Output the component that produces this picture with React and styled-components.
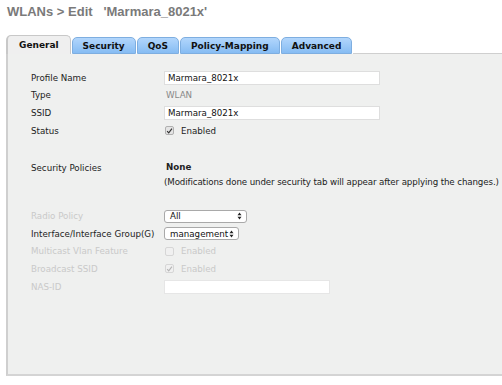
import React from 'react';
import styled, { createGlobalStyle } from 'styled-components';

const GlobalStyle = createGlobalStyle`
  html, body { margin: 0; padding: 0; background: #fff; }
  body { font-family: "DejaVu Sans", Verdana, sans-serif; }
`;

const tabs = ['General', 'Security', 'QoS', 'Policy-Mapping', 'Advanced'];

const CheckIcon = ({ checked, disabled }) => (
  <CheckBox $disabled={disabled}>
    {checked && (
      <svg width="8" height="8" viewBox="0 0 8 8">
        <path d="M1.3 4.2 L3.1 6.2 L6.8 1.2" fill="none" stroke={disabled ? '#b5b5b5' : '#333'} strokeWidth="1.3" />
      </svg>
    )}
  </CheckBox>
);

const Arrows = () => (
  <svg width="5" height="8" viewBox="0 0 5 8">
    <path d="M2.5 0.5 L4.5 3.2 L0.5 3.2 Z M2.5 7.5 L4.5 4.8 L0.5 4.8 Z" fill="#222" />
  </svg>
);

const App = () => {
  return (
    <Page>
      <GlobalStyle />
      <Title>WLANs &gt; Edit&nbsp;&nbsp; 'Marmara_8021x'</Title>
      <TabBar>
        {tabs.map((t, i) => (
          <Tab key={t} $active={i === 0}>{t}</Tab>
        ))}
        <TabFill />
      </TabBar>
      <Panel>
        <Form>
          <Label>Profile Name</Label>
          <Field><TextBox $w={216}>Marmara_8021x</TextBox></Field>
          <Label>Type</Label>
          <Field><Muted>WLAN</Muted></Field>
          <Label>SSID</Label>
          <Field><TextBox $w={216}>Marmara_8021x</TextBox></Field>
          <Label>Status</Label>
          <Field><CheckIcon checked /><CheckText>Enabled</CheckText></Field>
        </Form>

        <PolicyRow>
          <Label>Security Policies</Label>
          <PolicyText>
            <strong>None</strong>
            <span>(Modifications done under security tab will appear after applying the changes.)</span>
          </PolicyText>
        </PolicyRow>

        <Form>
          <Label $disabled>Radio Policy</Label>
          <Field><Select $w={83}><span>All</span><Arrows /></Select></Field>
          <Label>Interface/Interface Group(G)</Label>
          <Field><Select $w={75}><span>management</span><Arrows /></Select></Field>
          <Label $disabled>Multicast Vlan Feature</Label>
          <Field><CheckIcon disabled /><CheckText $disabled>Enabled</CheckText></Field>
          <Label $disabled>Broadcast SSID</Label>
          <Field><CheckIcon checked disabled /><CheckText $disabled>Enabled</CheckText></Field>
          <Label $disabled>NAS-ID</Label>
          <Field><TextBox $w={166} $disabled /></Field>
        </Form>
      </Panel>
    </Page>
  );
};

export default App;

const Page = styled.div`
  width: 502px;
  height: 385px;
  overflow: hidden;
  padding: 4px 0 0 6px;
  box-sizing: border-box;
`;

const Title = styled.div`
  font-family: "Liberation Sans", Arial, sans-serif;
  font-weight: bold;
  font-size: 13px;
  color: #7a7a7a;
  padding-left: 1px;
  height: 16px;
  line-height: 16px;
`;

const TabBar = styled.div`
  display: flex;
  align-items: flex-end;
  margin-top: 15px;
  height: 19px;
`;

const Tab = styled.div`
  height: ${p => (p.$active ? '19px' : '17px')};
  box-sizing: border-box;
  padding: 0 10px;
  margin-right: 1px;
  display: flex;
  align-items: center;
  font-size: 9px;
  font-weight: bold;
  color: #111;
  border: 1px solid ${p => (p.$active ? '#c8c8c8' : '#7eaee0')};
  border-bottom: ${p => (p.$active ? 'none' : '1px solid #7eaee0')};
  border-radius: 5px 5px 0 0;
  background: ${p => (p.$active ? '#efefef' : 'linear-gradient(#b2d6fc, #86bcf3)')};
  &:first-child {
    padding: 0 11px;
    border-left-width: 2px;
  }
`;

const TabFill = styled.div`
  flex: 1;
  align-self: flex-end;
  border-bottom: 1px solid #cfcfcf;
`;

const Panel = styled.div`
  height: 322px;
  background: #eff0ef;
  border-left: 2px solid #cfcfcf;
  border-bottom: 2px solid #d4d4d4;
  padding: 15px 0 0 23px;
  box-sizing: border-box;
`;

const Form = styled.div`
  display: grid;
  grid-template-columns: 133px 1fr;
  grid-auto-rows: 17.6px;
  align-items: center;
`;

const Label = styled.div`
  font-size: 8.7px;
  color: ${p => (p.$disabled ? '#c9c9c9' : '#222')};
  white-space: nowrap;
`;

const Field = styled.div`
  display: flex;
  align-items: center;
  font-size: 8.7px;
  color: #222;
`;

const TextBox = styled.div`
  width: ${p => p.$w}px;
  height: 14px;
  box-sizing: border-box;
  background: #fff;
  border: 1px solid ${p => (p.$disabled ? '#e6e6e6' : '#dedede')};
  padding: 0 3px;
  line-height: 12px;
  font-size: 8.7px;
  color: #111;
`;

const Muted = styled.span`
  color: #888;
  padding-left: 2px;
`;

const CheckBox = styled.span`
  width: 9px;
  height: 9px;
  box-sizing: border-box;
  border-radius: 2px;
  border: 1px solid ${p => (p.$disabled ? '#d6d6d6' : '#b0b0b0')};
  background: ${p => (p.$disabled ? '#f0f0f0' : '#e4e4e4')};
  display: inline-flex;
  align-items: center;
  justify-content: center;
  margin-left: 1px;
`;

const CheckText = styled.span`
  margin-left: 7px;
  color: ${p => (p.$disabled ? '#c9c9c9' : '#222')};
`;

const PolicyRow = styled.div`
  display: grid;
  grid-template-columns: 133px 1fr;
  margin-top: 24px;
  margin-bottom: 17px;
  align-items: start;
`;

const PolicyText = styled.div`
  display: flex;
  flex-direction: column;
  font-size: 8.7px;
  color: #222;
  line-height: 15px;
  margin-top: -3px;
  strong { padding-left: 2px; }
  span { white-space: nowrap; letter-spacing: -0.12px; }
`;

const Select = styled.div`
  width: ${p => p.$w}px;
  height: 13px;
  box-sizing: border-box;
  background: #fff;
  border: 1px solid #a9a9a9;
  border-radius: 3px;
  padding: 0 4px 0 5px;
  display: flex;
  align-items: center;
  justify-content: space-between;
  font-size: 8.7px;
  color: #111;
`;
